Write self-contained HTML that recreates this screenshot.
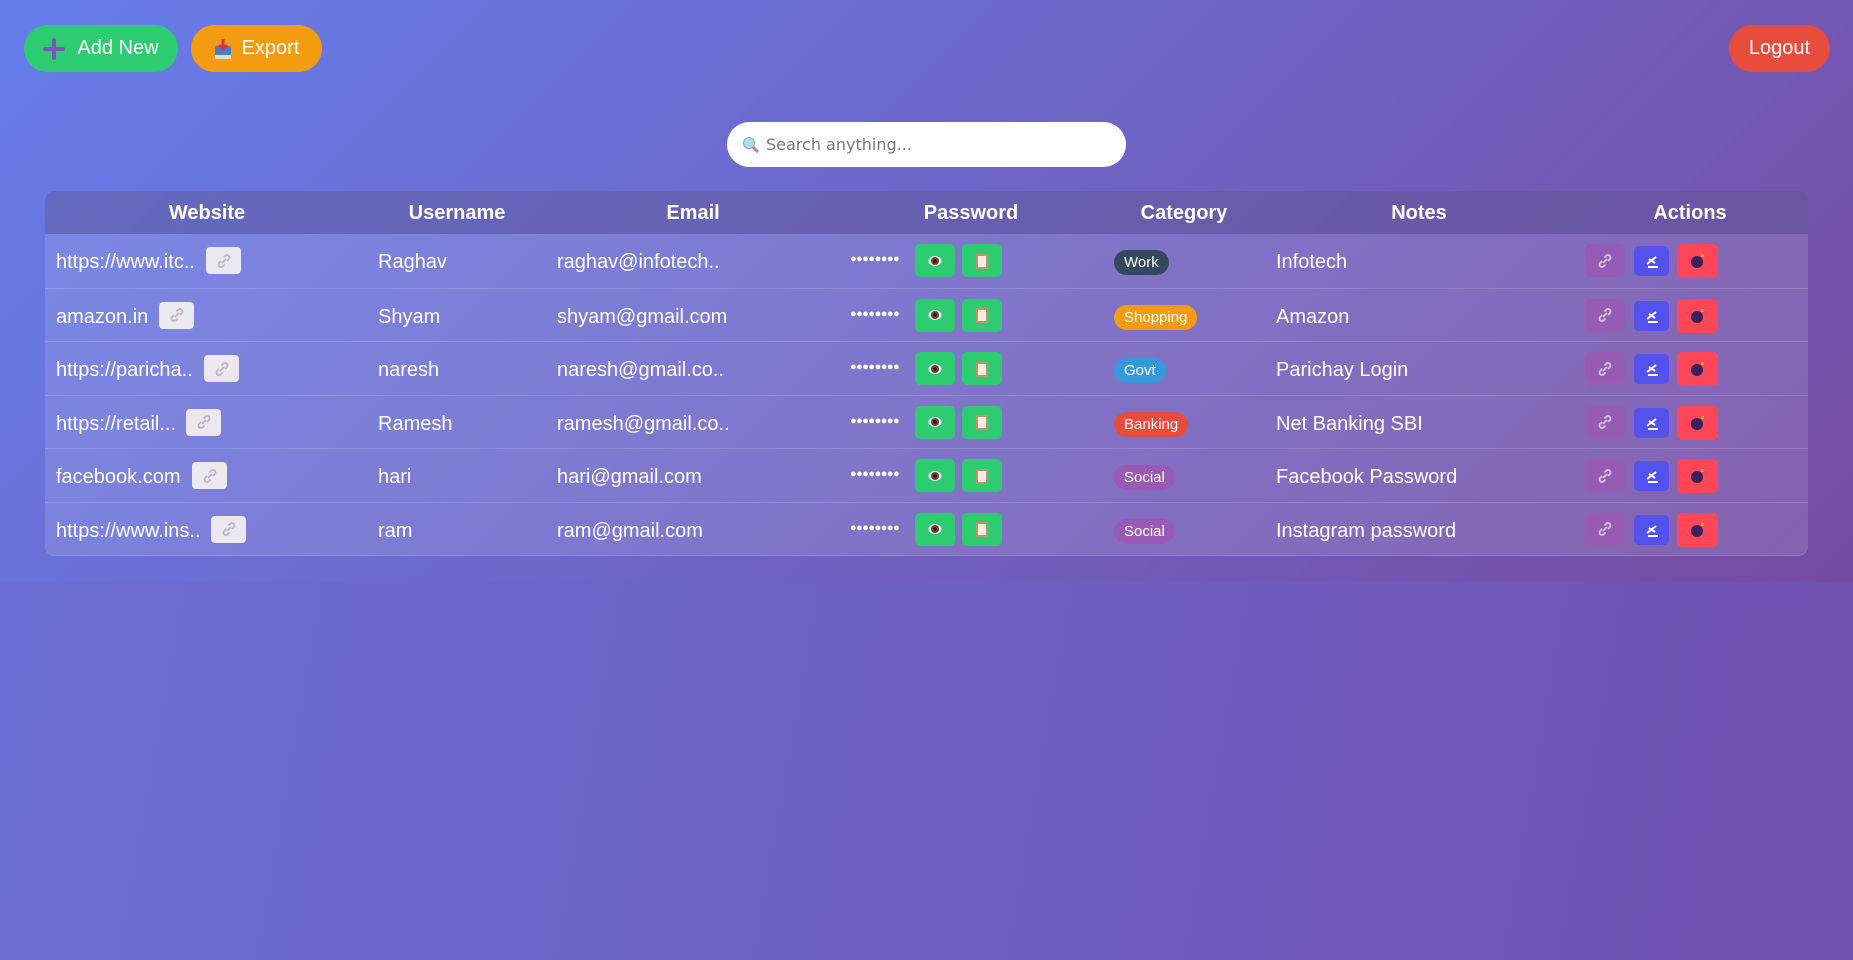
<!DOCTYPE html>
<html><head><meta charset="utf-8"><style>
html{margin:0;height:960px;background:linear-gradient(100deg,#6b70d6 0%,#7050b0 100%);}
body{margin:0;height:582px;background:linear-gradient(135deg,#667eea 0%,#764ba2 100%);font-family:"Liberation Sans",Arial,Helvetica,sans-serif;color:#fff;position:relative;overflow:visible}
.btn{position:absolute;border-radius:24px;font-size:20px;display:flex;align-items:center;justify-content:center;color:#fff}
.add{left:24px;top:25px;width:154px;height:47px;background:#2ecc71}
.exp{left:191px;top:25px;width:131px;height:47px;background:#f39c12}
.logout{left:1729px;top:25px;width:101px;height:47px;background:#e74c3c;box-sizing:border-box}
.search{position:absolute;left:727px;top:122px;width:399px;height:45px;background:#fff;border-radius:23px;font-family:"DejaVu Sans",sans-serif;font-size:16px;color:#777;display:flex;align-items:center;padding-left:15px;box-sizing:border-box}
.tbl{position:absolute;left:45px;top:191px;width:1763px;height:364px;background:rgba(255,255,255,0.12);border-radius:10px;overflow:hidden;box-shadow:0 1px 0 rgba(255,255,255,0.25)}
.hd{height:43px;background:rgba(60,50,120,0.35);position:relative;font-weight:bold;font-size:20px}
.hd span{position:absolute;top:11px;transform:translateX(-50%)}
.row{height:53.5px;position:relative;border-top:1px solid rgba(255,255,255,0.15);font-size:20px;box-sizing:border-box}
.row>*{position:absolute}
.t{top:17px}
.lk{width:35px;height:27px;background:#ebe8f0;border-radius:4px;top:13px;display:flex;align-items:center;justify-content:center}
.dots{top:19px;left:805px;font-size:11px;letter-spacing:-0.5px}
.g{top:10px;width:40px;height:33px;background:#2ecc71;border-radius:5px;display:flex;align-items:center;justify-content:center}
.bd{top:16px;left:1069px;height:25px;border-radius:13px;font-size:15px;padding:0 10px;display:flex;align-items:center}
.a1{left:1540px;top:10px;width:40px;height:33px;background:#9b59b6;opacity:.85;border-radius:5px;display:flex;align-items:center;justify-content:center}
.a2{left:1589px;top:12px;width:35px;height:30px;background:#5352ed;border-radius:5px;display:flex;align-items:center;justify-content:center}
.a3{left:1632px;top:10px;width:41px;height:34px;background:#ff4757;border-radius:5px;display:flex;align-items:center;justify-content:center}
</style></head><body>
<div class="btn add"><svg width="22" height="22" viewBox="0 0 22 22" style="margin-right:12px"><path d="M11 2v18M2 11h18" stroke="#7a55c0" stroke-width="4" stroke-linecap="round"/></svg>Add New</div>
<div class="btn exp"><svg width="18" height="22" viewBox="0 0 18 22" style="margin-right:10px"><rect x="1" y="8" width="16" height="13" rx="2" fill="#3f7fd0"/><rect x="1" y="17" width="16" height="4" fill="#ddd"/><path d="M9 1v10M5 7l4 4 4-4" stroke="#e03040" stroke-width="3" fill="none"/></svg>Export</div>
<div class="btn logout">Logout</div>
<div class="search"><svg width="18" height="18" viewBox="0 0 18 18" style="margin-right:6px"><circle cx="7" cy="7" r="5.5" fill="#a8e0f0" stroke="#8aa" stroke-width="1"/><path d="M11 11l5 5" stroke="#b080b0" stroke-width="3"/></svg>Search anything...</div>
<div class="tbl">
<div class="hd"><span style="left:162px">Website</span><span style="left:412px">Username</span><span style="left:648px">Email</span><span style="left:926px">Password</span><span style="left:1139px">Category</span><span style="left:1374px">Notes</span><span style="left:1645px">Actions</span></div>

<div class="row" style="border-top:none"><span class="t" style="left:11px">https://www.itc..</span><div class="lk" style="left:161px"><svg width="16" height="16" viewBox="0 0 16 16"><path d="M6 10l4-4M5 8l-2 2a2.5 2.5 0 003.5 3.5l2-2M11 8l2-2a2.5 2.5 0 00-3.5-3.5l-2 2" stroke="#c0b0c8" stroke-width="1.8" fill="none"/></svg></div><span class="t" style="left:333px">Raghav</span><span class="t" style="left:512px">raghav@infotech..</span><span class="dots">●●●●●●●●</span><div class="g" style="left:870px"><svg width="14" height="12"><ellipse cx="7" cy="6" rx="6.5" ry="5" fill="#eee"/><circle cx="7" cy="6" r="4" fill="#7a3a3a"/><circle cx="7" cy="6" r="1.8" fill="#222"/></svg></div><div class="g" style="left:917px"><svg width="12" height="16"><rect x="0" y="1" width="12" height="15" rx="1" fill="#c89060"/><rect x="2" y="3" width="8" height="11" fill="#eee"/></svg></div><span class="bd" style="background:#34495e">Work</span><span class="t" style="left:1231px">Infotech</span><div class="a1"><svg width="16" height="16" viewBox="0 0 16 16"><path d="M6 10l4-4M5 8l-2 2a2.5 2.5 0 003.5 3.5l2-2M11 8l2-2a2.5 2.5 0 00-3.5-3.5l-2 2" stroke="#ddd" stroke-width="1.8" fill="none"/></svg></div><div class="a2"><svg width="16" height="16" viewBox="0 0 16 16"><path d="M3 11l9-7M5 6l6 4M4 14h10" stroke="#fff" stroke-width="2"/></svg></div><div class="a3"><svg width="16" height="16" viewBox="0 0 16 16"><circle cx="7" cy="9" r="6" fill="#3a2060"/><rect x="11" y="1" width="3" height="3" fill="#f39c12"/></svg></div></div>

<div class="row"><span class="t" style="left:11px">amazon.in</span><div class="lk" style="left:114px"><svg width="16" height="16" viewBox="0 0 16 16"><path d="M6 10l4-4M5 8l-2 2a2.5 2.5 0 003.5 3.5l2-2M11 8l2-2a2.5 2.5 0 00-3.5-3.5l-2 2" stroke="#c0b0c8" stroke-width="1.8" fill="none"/></svg></div><span class="t" style="left:333px">Shyam</span><span class="t" style="left:512px">shyam@gmail.com</span><span class="dots">●●●●●●●●</span><div class="g" style="left:870px"><svg width="14" height="12"><ellipse cx="7" cy="6" rx="6.5" ry="5" fill="#eee"/><circle cx="7" cy="6" r="4" fill="#7a3a3a"/><circle cx="7" cy="6" r="1.8" fill="#222"/></svg></div><div class="g" style="left:917px"><svg width="12" height="16"><rect x="0" y="1" width="12" height="15" rx="1" fill="#c89060"/><rect x="2" y="3" width="8" height="11" fill="#eee"/></svg></div><span class="bd" style="background:#f39c12">Shopping</span><span class="t" style="left:1231px">Amazon</span><div class="a1"><svg width="16" height="16" viewBox="0 0 16 16"><path d="M6 10l4-4M5 8l-2 2a2.5 2.5 0 003.5 3.5l2-2M11 8l2-2a2.5 2.5 0 00-3.5-3.5l-2 2" stroke="#ddd" stroke-width="1.8" fill="none"/></svg></div><div class="a2"><svg width="16" height="16" viewBox="0 0 16 16"><path d="M3 11l9-7M5 6l6 4M4 14h10" stroke="#fff" stroke-width="2"/></svg></div><div class="a3"><svg width="16" height="16" viewBox="0 0 16 16"><circle cx="7" cy="9" r="6" fill="#3a2060"/><rect x="11" y="1" width="3" height="3" fill="#f39c12"/></svg></div></div>

<div class="row"><span class="t" style="left:11px">https://paricha..</span><div class="lk" style="left:159px"><svg width="16" height="16" viewBox="0 0 16 16"><path d="M6 10l4-4M5 8l-2 2a2.5 2.5 0 003.5 3.5l2-2M11 8l2-2a2.5 2.5 0 00-3.5-3.5l-2 2" stroke="#c0b0c8" stroke-width="1.8" fill="none"/></svg></div><span class="t" style="left:333px">naresh</span><span class="t" style="left:512px">naresh@gmail.co..</span><span class="dots">●●●●●●●●</span><div class="g" style="left:870px"><svg width="14" height="12"><ellipse cx="7" cy="6" rx="6.5" ry="5" fill="#eee"/><circle cx="7" cy="6" r="4" fill="#7a3a3a"/><circle cx="7" cy="6" r="1.8" fill="#222"/></svg></div><div class="g" style="left:917px"><svg width="12" height="16"><rect x="0" y="1" width="12" height="15" rx="1" fill="#c89060"/><rect x="2" y="3" width="8" height="11" fill="#eee"/></svg></div><span class="bd" style="background:#3498db">Govt</span><span class="t" style="left:1231px">Parichay Login</span><div class="a1"><svg width="16" height="16" viewBox="0 0 16 16"><path d="M6 10l4-4M5 8l-2 2a2.5 2.5 0 003.5 3.5l2-2M11 8l2-2a2.5 2.5 0 00-3.5-3.5l-2 2" stroke="#ddd" stroke-width="1.8" fill="none"/></svg></div><div class="a2"><svg width="16" height="16" viewBox="0 0 16 16"><path d="M3 11l9-7M5 6l6 4M4 14h10" stroke="#fff" stroke-width="2"/></svg></div><div class="a3"><svg width="16" height="16" viewBox="0 0 16 16"><circle cx="7" cy="9" r="6" fill="#3a2060"/><rect x="11" y="1" width="3" height="3" fill="#f39c12"/></svg></div></div>

<div class="row"><span class="t" style="left:11px">https://retail...</span><div class="lk" style="left:141px"><svg width="16" height="16" viewBox="0 0 16 16"><path d="M6 10l4-4M5 8l-2 2a2.5 2.5 0 003.5 3.5l2-2M11 8l2-2a2.5 2.5 0 00-3.5-3.5l-2 2" stroke="#c0b0c8" stroke-width="1.8" fill="none"/></svg></div><span class="t" style="left:333px">Ramesh</span><span class="t" style="left:512px">ramesh@gmail.co..</span><span class="dots">●●●●●●●●</span><div class="g" style="left:870px"><svg width="14" height="12"><ellipse cx="7" cy="6" rx="6.5" ry="5" fill="#eee"/><circle cx="7" cy="6" r="4" fill="#7a3a3a"/><circle cx="7" cy="6" r="1.8" fill="#222"/></svg></div><div class="g" style="left:917px"><svg width="12" height="16"><rect x="0" y="1" width="12" height="15" rx="1" fill="#c89060"/><rect x="2" y="3" width="8" height="11" fill="#eee"/></svg></div><span class="bd" style="background:#e74c3c">Banking</span><span class="t" style="left:1231px">Net Banking SBI</span><div class="a1"><svg width="16" height="16" viewBox="0 0 16 16"><path d="M6 10l4-4M5 8l-2 2a2.5 2.5 0 003.5 3.5l2-2M11 8l2-2a2.5 2.5 0 00-3.5-3.5l-2 2" stroke="#ddd" stroke-width="1.8" fill="none"/></svg></div><div class="a2"><svg width="16" height="16" viewBox="0 0 16 16"><path d="M3 11l9-7M5 6l6 4M4 14h10" stroke="#fff" stroke-width="2"/></svg></div><div class="a3"><svg width="16" height="16" viewBox="0 0 16 16"><circle cx="7" cy="9" r="6" fill="#3a2060"/><rect x="11" y="1" width="3" height="3" fill="#f39c12"/></svg></div></div>

<div class="row"><span class="t" style="left:11px">facebook.com</span><div class="lk" style="left:147px"><svg width="16" height="16" viewBox="0 0 16 16"><path d="M6 10l4-4M5 8l-2 2a2.5 2.5 0 003.5 3.5l2-2M11 8l2-2a2.5 2.5 0 00-3.5-3.5l-2 2" stroke="#c0b0c8" stroke-width="1.8" fill="none"/></svg></div><span class="t" style="left:333px">hari</span><span class="t" style="left:512px">hari@gmail.com</span><span class="dots">●●●●●●●●</span><div class="g" style="left:870px"><svg width="14" height="12"><ellipse cx="7" cy="6" rx="6.5" ry="5" fill="#eee"/><circle cx="7" cy="6" r="4" fill="#7a3a3a"/><circle cx="7" cy="6" r="1.8" fill="#222"/></svg></div><div class="g" style="left:917px"><svg width="12" height="16"><rect x="0" y="1" width="12" height="15" rx="1" fill="#c89060"/><rect x="2" y="3" width="8" height="11" fill="#eee"/></svg></div><span class="bd" style="background:#9b59b6">Social</span><span class="t" style="left:1231px">Facebook Password</span><div class="a1"><svg width="16" height="16" viewBox="0 0 16 16"><path d="M6 10l4-4M5 8l-2 2a2.5 2.5 0 003.5 3.5l2-2M11 8l2-2a2.5 2.5 0 00-3.5-3.5l-2 2" stroke="#ddd" stroke-width="1.8" fill="none"/></svg></div><div class="a2"><svg width="16" height="16" viewBox="0 0 16 16"><path d="M3 11l9-7M5 6l6 4M4 14h10" stroke="#fff" stroke-width="2"/></svg></div><div class="a3"><svg width="16" height="16" viewBox="0 0 16 16"><circle cx="7" cy="9" r="6" fill="#3a2060"/><rect x="11" y="1" width="3" height="3" fill="#f39c12"/></svg></div></div>

<div class="row"><span class="t" style="left:11px">https://www.ins..</span><div class="lk" style="left:166px"><svg width="16" height="16" viewBox="0 0 16 16"><path d="M6 10l4-4M5 8l-2 2a2.5 2.5 0 003.5 3.5l2-2M11 8l2-2a2.5 2.5 0 00-3.5-3.5l-2 2" stroke="#c0b0c8" stroke-width="1.8" fill="none"/></svg></div><span class="t" style="left:333px">ram</span><span class="t" style="left:512px">ram@gmail.com</span><span class="dots">●●●●●●●●</span><div class="g" style="left:870px"><svg width="14" height="12"><ellipse cx="7" cy="6" rx="6.5" ry="5" fill="#eee"/><circle cx="7" cy="6" r="4" fill="#7a3a3a"/><circle cx="7" cy="6" r="1.8" fill="#222"/></svg></div><div class="g" style="left:917px"><svg width="12" height="16"><rect x="0" y="1" width="12" height="15" rx="1" fill="#c89060"/><rect x="2" y="3" width="8" height="11" fill="#eee"/></svg></div><span class="bd" style="background:#9b59b6">Social</span><span class="t" style="left:1231px">Instagram password</span><div class="a1"><svg width="16" height="16" viewBox="0 0 16 16"><path d="M6 10l4-4M5 8l-2 2a2.5 2.5 0 003.5 3.5l2-2M11 8l2-2a2.5 2.5 0 00-3.5-3.5l-2 2" stroke="#ddd" stroke-width="1.8" fill="none"/></svg></div><div class="a2"><svg width="16" height="16" viewBox="0 0 16 16"><path d="M3 11l9-7M5 6l6 4M4 14h10" stroke="#fff" stroke-width="2"/></svg></div><div class="a3"><svg width="16" height="16" viewBox="0 0 16 16"><circle cx="7" cy="9" r="6" fill="#3a2060"/><rect x="11" y="1" width="3" height="3" fill="#f39c12"/></svg></div></div>
</div>
</body></html>
